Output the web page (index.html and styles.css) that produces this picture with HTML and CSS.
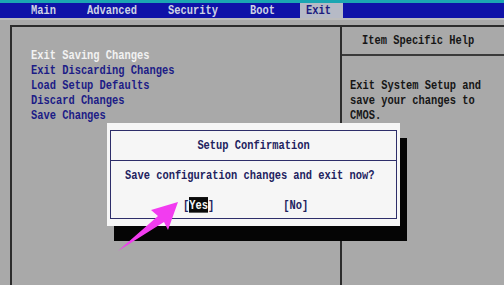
FILE: index.html
```html
<!DOCTYPE html>
<html lang="en">
<head>
    <meta charset="UTF-8">
    <title>BIOS Setup Utility - Exit</title>
    <link rel="stylesheet" href="styles.css">
</head>
<body>
    <div class="screen">
        <div class="title-strip"></div>

        <div class="menubar">
            <div class="menu-item"><span class="t">Main</span></div>
            <div class="menu-item"><span class="t">Advanced</span></div>
            <div class="menu-item"><span class="t">Security</span></div>
            <div class="menu-item"><span class="t">Boot</span></div>
            <div class="menu-item active"><span class="t">Exit</span></div>
        </div>

        <div class="frame">
            <div class="options">
                <div class="line selected">Exit Saving Changes</div>
                <div class="line">Exit Discarding Changes</div>
                <div class="line">Load Setup Defaults</div>
                <div class="line">Discard Changes</div>
                <div class="line">Save Changes</div>
            </div>
            <div class="help">
                <div class="help-title"><div class="line">Item Specific Help</div></div>
                <div class="help-body">
                    <div class="line">Exit System Setup and</div>
                    <div class="line">save your changes to</div>
                    <div class="line">CMOS.</div>
                </div>
            </div>
        </div>

        <div class="dialog">
            <div class="dialog-inner">
                <div class="dialog-title"><div class="line">Setup Confirmation</div></div>
                <div class="dialog-msg"><div class="line">Save configuration changes and exit now?</div></div>
                <div class="dialog-buttons">
                    <span class="btn">[<span class="hl">Yes</span>]</span>
                    <span class="btn">[No]</span>
                </div>
            </div>
        </div>

        <svg class="arrow" width="504" height="285" viewBox="0 0 504 285">
            <polygon points="178,202 151,210 158,216 118,251 164,222 168,230" fill="#f23cf0"/>
        </svg>
    </div>
</body>
</html>
```

FILE: styles.css
```css
html, body {
    margin: 0;
    padding: 0;
}

body {
    background: #a9a9a9;
    font-family: "Liberation Mono", "DejaVu Sans Mono", monospace;
    font-weight: bold;
    font-size: 10.4px;
}

.screen {
    position: relative;
    width: 504px;
    height: 285px;
    overflow: hidden;
    background: #a9a9a9;
}

.t, .line {
    display: inline-block;
    transform: scaleY(1.3);
    white-space: pre;
}

.line {
    display: block;
    height: 15px;
    line-height: 15px;
}

.title-strip {
    height: 3px;
    background: #1ba6b2;
}

.menubar {
    display: flex;
    height: 15px;
    line-height: 15px;
    padding-left: 25px;
    background: #0f12a8;
    color: #cdd3e4;
    border-bottom: 2px solid #bcbcbc;
}

.menu-item {
    padding-left: 6px;
}

.menu-item:nth-child(1) { width: 50px; }
.menu-item:nth-child(2) { width: 75px; }
.menu-item:nth-child(3) { width: 76px; }
.menu-item:nth-child(4) { width: 50px; }
.menu-item:nth-child(5) { width: 37px; }

.menu-item.active {
    background: #b6bac6;
    color: #1c1c80;
}

.frame {
    display: flex;
    margin: 5px 0 0 10px;
    height: 300px;
    border-top: 2px solid #2c2c2c;
    border-left: 2px solid #2c2c2c;
}

.options {
    width: 309px;
    padding: 21px 0 0 19px;
    color: #1c1c86;
}

.options .selected {
    color: #f2f2f2;
}

.help {
    flex: 1;
    border-left: 2px solid #2c2c2c;
    color: #161616;
}

.help-title {
    height: 21px;
    padding: 6px 0 0 20px;
    border-bottom: 2px solid #3a3a3a;
}

.help-body {
    padding: 22px 0 0 8px;
}

.dialog {
    position: absolute;
    left: 107px;
    top: 123px;
    width: 287px;
    height: 89px;
    padding: 7px 3px;
    background: #f6f6f6;
    box-shadow: 7px 15px 0 #050505;
    color: #22225e;
}

.dialog-inner {
    height: 87px;
    border: 1px solid #2e2e6a;
}

.dialog-title {
    height: 22px;
    padding-top: 7px;
    text-align: center;
    border-bottom: 1px solid #2e2e6a;
}

.dialog-msg {
    padding: 7px 0 0 14px;
}

.dialog-buttons {
    display: flex;
    gap: 69px;
    padding: 15px 0 0 72px;
    height: 15px;
    line-height: 15px;
}

.btn {
    display: inline-block;
    transform: scaleY(1.3);
    white-space: pre;
}

.hl {
    background: #0a0a0a;
    color: #f6f6f6;
}

.arrow {
    position: absolute;
    left: 0;
    top: 0;
}
```
